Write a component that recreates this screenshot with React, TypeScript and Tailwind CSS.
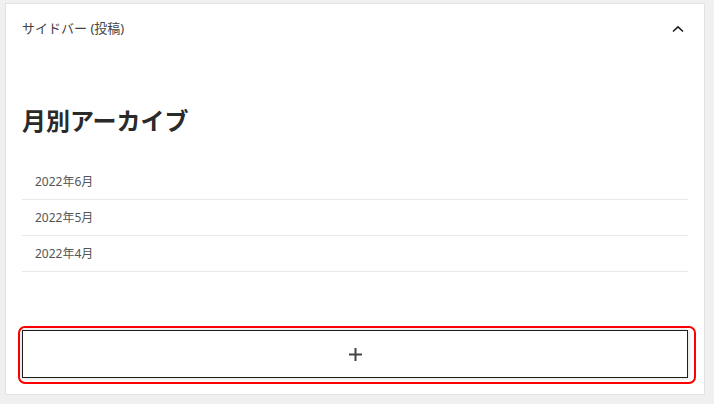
import React from "react";

const font = { fontFamily: '"Noto Sans", "Noto Sans CJK JP", sans-serif' };

export default function App() {
  const months = ["2022年6月", "2022年5月", "2022年4月"];
  return (
    <div className="w-[714px] h-[404px] bg-[#f0f0f0] pt-[3px] pl-[5px]" style={font}>
      <div className="w-[700px] h-[392px] bg-white border border-[#e2e2e2] flex flex-col">
        <div className="h-[50px] flex items-center justify-between pl-4 pr-[19px]">
          <span className="text-[13px] text-[#444]">サイドバー (投稿)</span>
          <svg width="14" height="8" viewBox="0 0 14 8" fill="none">
            <path d="M2 6.5 L7 1.8 L12 6.5" stroke="#1e1e1e" strokeWidth="1.6" />
          </svg>
        </div>
        <h2 className="mt-[49px] ml-4 text-[24px] leading-[36px] font-bold text-[#2a2a2a]">月別アーカイブ</h2>
        <div className="mt-[25px] mx-4 flex flex-col">
          {months.map((m) => (
            <div key={m} className="h-[36px] border-b border-[#e8e8e8] pl-[13px] flex items-center text-[12px] text-[#555]">
              {m}
            </div>
          ))}
        </div>
        <div className="mt-[54px] ml-[12px] w-[678px] h-[58px] border-2 border-[#ff0000] rounded-[7px] pl-[2px] pt-[2px]">
          <div className="w-[666px] h-[48px] border border-[#1e1e1e] bg-white shadow-[0_0_5px_rgba(0,0,0,0.18)] flex items-center justify-center">
            <svg width="13" height="13" viewBox="0 0 13 13">
              <path d="M6.5 0 V13 M0 6.5 H13" stroke="#444" strokeWidth="2" />
            </svg>
          </div>
        </div>
      </div>
    </div>
  );
}
